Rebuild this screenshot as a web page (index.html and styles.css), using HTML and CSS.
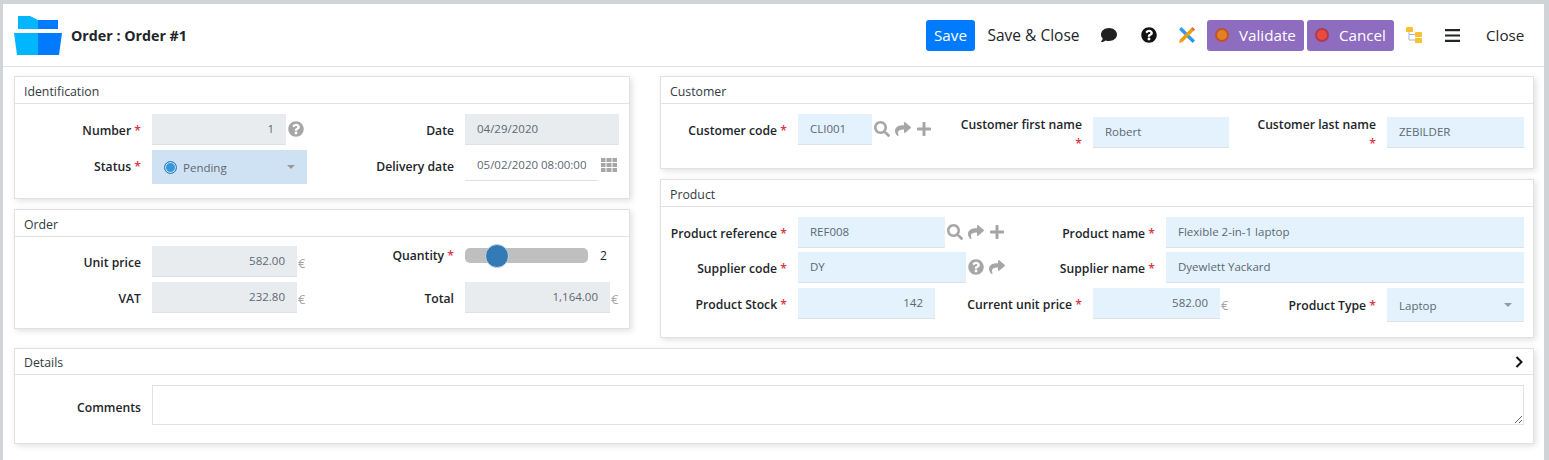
FILE: index.html
```html
<!DOCTYPE html>
<html lang="en">
<head>
    <meta name="viewport" content="width=device-width, initial-scale=1">
    <meta charset="UTF-8">
    <title>Order : Order #1</title>
    <link rel="stylesheet" href="styles.css">
</head>
<body>
<svg class="sprite" xmlns="http://www.w3.org/2000/svg">
    <symbol id="i-question" viewBox="0 0 512 512"><path d="M504 256c0 136.997-111.043 248-248 248S8 392.997 8 256C8 119.083 119.043 8 256 8s248 111.083 248 248zM262.655 90c-54.497 0-89.255 22.957-116.549 63.758-3.536 5.286-2.353 12.415 2.715 16.258l34.699 26.31c5.205 3.947 12.621 3.008 16.665-2.122 17.864-22.658 30.113-35.797 57.303-35.797 20.429 0 45.698 13.148 45.698 32.958 0 14.976-12.363 22.667-32.534 33.976C247.128 238.528 216 254.941 216 296v4c0 6.627 5.373 12 12 12h56c6.627 0 12-5.373 12-12v-1.333c0-28.462 83.186-29.647 83.186-106.667 0-58.002-60.165-102-116.531-102zM256 338c-25.365 0-46 20.635-46 46 0 25.364 20.635 46 46 46s46-20.636 46-46c0-25.365-20.635-46-46-46z"/></symbol>
    <symbol id="i-search" viewBox="0 0 512 512"><path d="M505 442.7L405.3 343c-4.5-4.5-10.6-7-17-7H372c27.6-35.3 44-79.7 44-128C416 93.1 322.9 0 208 0S0 93.1 0 208s93.1 208 208 208c48.3 0 92.7-16.4 128-44v16.3c0 6.4 2.5 12.5 7 17l99.7 99.7c9.4 9.4 24.6 9.4 33.9 0l28.3-28.3c9.4-9.4 9.4-24.6.1-34zM208 336c-70.7 0-128-57.2-128-128 0-70.7 57.2-128 128-128 70.7 0 128 57.2 128 128 0 70.7-57.2 128-128 128z"/></symbol>
    <symbol id="i-share" viewBox="0 0 512 512"><path d="M503.691 189.836L327.687 37.851C312.281 24.546 288 35.347 288 56.015v80.053C127.371 137.907 0 170.1 0 322.326c0 61.441 39.581 122.309 83.333 154.132 13.653 9.931 33.111-2.533 28.077-18.631C66.066 312.814 132.917 274.316 288 272.085V360c0 20.7 24.3 31.453 39.687 18.164l176.004-152c11.071-9.562 11.086-26.753 0-36.328z"/></symbol>
    <symbol id="i-plus" viewBox="0 0 448 512"><path d="M416 208H272V64c0-17.67-14.33-32-32-32h-32c-17.67 0-32 14.33-32 32v144H32c-17.67 0-32 14.33-32 32v32c0 17.67 14.33 32 32 32h144v144c0 17.67 14.33 32 32 32h32c17.67 0 32-14.33 32-32V304h144c17.67 0 32-14.33 32-32v-32c0-17.67-14.33-32-32-32z"/></symbol>
    <symbol id="i-comment" viewBox="0 0 512 512"><path d="M256 32C114.6 32 0 125.1 0 240c0 49.6 21.4 95 57 130.7C44.5 421.1 2.7 466 2.2 466.5c-2.2 2.3-2.8 5.7-1.5 8.7S4.8 480 8 480c66.3 0 116-31.8 140.6-51.4 32.7 12.3 69 19.4 107.4 19.4 141.4 0 256-93.1 256-208S397.4 32 256 32z"/></symbol>
</svg>

<div class="page">
    <header class="toolbar">
        <svg class="logo" viewBox="0 0 48 39" xmlns="http://www.w3.org/2000/svg">
            <path fill="#00b7ff" d="M4 0h12l8 4v9H4z"/>
            <path fill="#007bff" d="M24 4h20v9H24z"/>
            <path fill="#00b7ff" d="M0 17h24v22H3z"/>
            <path fill="#007bff" d="M24 17h24l-3 22H24z"/>
        </svg>
        <h1 class="title">Order : Order #1</h1>
        <div class="actions">
            <button class="btn btn-save" type="button">Save</button>
            <button class="btn btn-text btn-saveclose" type="button">Save &amp; Close</button>
            <svg class="tool tool-comment"><use href="#i-comment"/></svg>
            <svg class="tool tool-help"><use href="#i-question"/></svg>
            <svg class="tool tool-tools" viewBox="0 0 18 18" xmlns="http://www.w3.org/2000/svg">
                <path fill="#2f9be8" d="M3.4 1 17 14.6 14.6 17 1 3.4z"/>
                <path fill="#f39c12" d="M14 1.5 16.5 4 4.5 16 1 17l1-3.500z"/>
                <path fill="#e8703a" d="M13 2.500 14.500.9 17.100 3.500 15.500 5z"/>
            </svg>
            <button class="btn btn-step btn-validate" type="button"><span class="dot dot-orange"></span>Validate</button>
            <button class="btn btn-step btn-cancel" type="button"><span class="dot dot-red"></span>Cancel</button>
            <svg class="tool tool-tree" viewBox="0 0 16 16" xmlns="http://www.w3.org/2000/svg">
                <path fill="none" stroke="#a9b7c6" d="M3 4v9h7M3 7.500h7"/>
                <rect fill="#fbc02d" x="0" y="0" width="7" height="5" rx="1"/>
                <rect fill="#fbc02d" x="9" y="5" width="7" height="5" rx="1"/>
                <rect fill="#fbc02d" x="9" y="11" width="7" height="5" rx="1"/>
            </svg>
            <svg class="tool tool-bars" viewBox="0 0 15 13" xmlns="http://www.w3.org/2000/svg">
                <path fill="#212529" d="M0 0h15v2.200H0zM0 5.400h15v2.200H0zM0 10.800h15V13H0z"/>
            </svg>
            <button class="btn btn-text btn-close" type="button">Close</button>
        </div>
    </header>

    <main class="content">
        <div class="columns">
            <div class="col col-left">
                <section class="panel panel-ident">
                    <h2 class="panel-title">Identification</h2>
                    <div class="panel-body">
                        <div class="row row-1">
                            <div class="group group-a">
                                <label class="lbl">Number <em>*</em></label>
                                <span class="val ro right w-134">1</span>
                                <svg class="ico help"><use href="#i-question"/></svg>
                            </div>
                            <div class="group">
                                <label class="lbl">Date</label>
                                <span class="val ro w-154">04/29/2020</span>
                            </div>
                        </div>
                        <div class="row">
                            <div class="group group-a">
                                <label class="lbl">Status <em>*</em></label>
                                <span class="val select status w-155"><span class="status-dot"></span>Pending<i class="caret"></i></span>
                            </div>
                            <div class="group">
                                <label class="lbl">Delivery date</label>
                                <span class="val plain w-133">05/02/2020 08:00:00</span>
                                <svg class="grid-ico" viewBox="0 0 16 14" xmlns="http://www.w3.org/2000/svg"><path fill="#a6a6a6" d="M0 0h4.500v4H0zM5.500 0h5v4h-5zM11.500 0H16v4h-4.500zM0 5h4.500v4H0zM5.500 5h5v4h-5zM11.500 5H16v4h-4.500zM0 10h4.500v4H0zM5.500 10h5v4h-5zM11.500 10H16v4h-4.500z"/></svg>
                            </div>
                        </div>
                    </div>
                </section>

                <section class="panel panel-order">
                    <h2 class="panel-title">Order</h2>
                    <div class="panel-body">
                        <div class="row row-1">
                            <div class="group group-a">
                                <label class="lbl">Unit price</label>
                                <span class="val ro right w-145">582.00</span>
                                <span class="euro">€</span>
                            </div>
                            <div class="group">
                                <label class="lbl lbl-high">Quantity <em>*</em></label>
                                <div class="slider"><span class="knob"></span></div>
                                <span class="slider-val">2</span>
                            </div>
                        </div>
                        <div class="row">
                            <div class="group group-a">
                                <label class="lbl">VAT</label>
                                <span class="val ro right w-145">232.80</span>
                                <span class="euro">€</span>
                            </div>
                            <div class="group">
                                <label class="lbl">Total</label>
                                <span class="val ro right w-145">1,164.00</span>
                                <span class="euro">€</span>
                            </div>
                        </div>
                    </div>
                </section>
            </div>

            <div class="col col-right">
                <section class="panel panel-customer">
                    <h2 class="panel-title">Customer</h2>
                    <div class="panel-body">
                        <div class="row">
                            <div class="group group-b">
                                <label class="lbl">Customer code <em>*</em></label>
                                <span class="val req w-74">CLI001</span>
                                <span class="ico-set">
                                    <svg class="ico"><use href="#i-search"/></svg>
                                    <svg class="ico"><use href="#i-share"/></svg>
                                    <svg class="ico"><use href="#i-plus"/></svg>
                                </span>
                            </div>
                            <div class="group group-d">
                                <label class="lbl lbl-wrap">Customer first name <em>*</em></label>
                                <span class="val req low w-136">Robert</span>
                            </div>
                            <div class="group">
                                <label class="lbl lbl-wrap">Customer last name <em>*</em></label>
                                <span class="val req low w-137">ZEBILDER</span>
                            </div>
                        </div>
                    </div>
                </section>

                <section class="panel panel-product">
                    <h2 class="panel-title">Product</h2>
                    <div class="panel-body">
                        <div class="row row-p">
                            <div class="group group-c">
                                <label class="lbl">Product reference <em>*</em></label>
                                <span class="val req w-147">REF008</span>
                                <span class="ico-set">
                                    <svg class="ico"><use href="#i-search"/></svg>
                                    <svg class="ico"><use href="#i-share"/></svg>
                                    <svg class="ico"><use href="#i-plus"/></svg>
                                </span>
                            </div>
                            <div class="group">
                                <label class="lbl">Product name <em>*</em></label>
                                <span class="val req w-358">Flexible 2-in-1 laptop</span>
                            </div>
                        </div>
                        <div class="row row-1">
                            <div class="group group-c">
                                <label class="lbl">Supplier code <em>*</em></label>
                                <span class="val req w-168">DY</span>
                                <span class="ico-set">
                                    <svg class="ico"><use href="#i-question"/></svg>
                                    <svg class="ico"><use href="#i-share"/></svg>
                                </span>
                            </div>
                            <div class="group">
                                <label class="lbl">Supplier name <em>*</em></label>
                                <span class="val req w-358">Dyewlett Yackard</span>
                            </div>
                        </div>
                        <div class="row">
                            <div class="group group-b">
                                <label class="lbl">Product Stock <em>*</em></label>
                                <span class="val req right w-137">142</span>
                            </div>
                            <div class="group group-d">
                                <label class="lbl">Current unit price <em>*</em></label>
                                <span class="val req right w-127">582.00</span>
                                <span class="euro">€</span>
                            </div>
                            <div class="group">
                                <label class="lbl lbl-select">Product Type <em>*</em></label>
                                <span class="val select req w-137">Laptop<i class="caret"></i></span>
                            </div>
                        </div>
                    </div>
                </section>
            </div>
        </div>

        <section class="panel panel-details">
            <h2 class="panel-title">Details
                <svg class="chevron" viewBox="0 0 8 12" xmlns="http://www.w3.org/2000/svg"><path fill="none" stroke="#111" stroke-width="2" d="M1.500 1 6.500 6l-5 5"/></svg>
            </h2>
            <div class="panel-body">
                <div class="row">
                    <label class="lbl lbl-comments">Comments</label>
                    <textarea class="comments"></textarea>
                </div>
            </div>
        </section>
    </main>
</div>
</body>
</html>
```

FILE: styles.css
```css
* {
    box-sizing: border-box;
}

body {
    margin: 0;
    height: 460px;
    overflow: hidden;
    background-color: #ced4d7;
    padding: 4px 5px 0 3px;
    font-family: "Open Sans", "Liberation Sans", sans-serif;
    font-size: 12px;
    color: #212529;
}

.sprite {
    display: none;
}

.page {
    background-color: #fff;
    height: 456px;
}

/* toolbar */
.toolbar {
    display: flex;
    align-items: center;
    height: 63px;
    padding: 0 20px 0 11px;
    border-bottom: 1px solid #dee2e6;
}

.logo {
    width: 48px;
    height: 39px;
    flex: none;
}

.title {
    margin: 0 0 0 9px;
    font-size: 14.250px;
    font-weight: 700;
    color: #212529;
}

.actions {
    margin-left: auto;
    display: flex;
    align-items: center;
}

.btn {
    font-family: inherit;
    font-size: 15.200px;
    height: 31px;
    border: none;
    border-radius: 3px;
    padding: 0;
    background: none;
    color: #212529;
    cursor: pointer;
    white-space: nowrap;
}

.btn-save {
    width: 49px;
    background-color: #007bff;
    color: #fff;
}

.btn-saveclose {
    margin-left: 12px;
    width: 93px;
    font-size: 15.500px;
}

.btn-step {
    display: flex;
    align-items: center;
    background-color: #8e6cc0;
    color: #fff;
    padding-left: 8px;
}

.btn-validate {
    margin-left: 11px;
    width: 97px;
}

.btn-cancel {
    margin-left: 3px;
    width: 87px;
}

.btn-close {
    margin-left: 26px;
    width: 38px;
}

.dot {
    width: 14px;
    height: 14px;
    border-radius: 50%;
    margin-right: 10px;
    flex: none;
}

.dot-orange {
    background-color: #e67e22;
    border: 2px solid #b9562f;
}

.dot-red {
    background-color: #e74c3c;
    border: 2px solid #b03a50;
}

.tool {
    flex: none;
}

.tool-comment {
    width: 16px;
    height: 16px;
    margin-left: 21px;
    fill: #212121;
}

.tool-help {
    width: 16px;
    height: 16px;
    margin-left: 24px;
    fill: #111;
}

.tool-tools {
    width: 18px;
    height: 18px;
    margin-left: 21px;
}

.tool-tree {
    width: 16px;
    height: 16px;
    margin-left: 12px;
}

.tool-bars {
    width: 15px;
    height: 13px;
    margin-left: 23px;
}

/* content */
.content {
    padding: 9px 10px 0 11px;
}

.columns {
    display: flex;
    gap: 30px;
}

.col {
    display: flex;
    flex-direction: column;
    gap: 10px;
}

.col-left {
    width: 616px;
}

.col-right {
    width: 874px;
}

.panel {
    background-color: #fff;
    border: 1px solid #dee2e6;
    box-shadow: 2px 2px 6px rgba(0, 0, 0, 0.12);
}

.panel-ident {
    height: 123px;
}

.panel-order {
    height: 120px;
}

.panel-customer {
    height: 93px;
}

.panel-product {
    height: 159px;
}

.panel-details {
    margin-top: 10px;
    height: 96px;
}

.panel-title {
    position: relative;
    margin: 0;
    height: 27px;
    padding: 2px 0 0 9px;
    line-height: 26px;
    font-size: 12.300px;
    font-weight: 400;
    color: #343a40;
    border-bottom: 1px solid #dee2e6;
}

.panel-details .panel-title {
    height: 26px;
    padding-top: 1px;
}

.chevron {
    position: absolute;
    right: 10px;
    top: 7px;
    width: 8px;
    height: 12px;
}

.panel-body {
    padding-top: 10px;
}

.panel-order .panel-body {
    padding-top: 9px;
}

.row {
    display: flex;
    align-items: flex-start;
}

.row-1 {
    margin-bottom: 5px;
}

.row-p {
    margin-bottom: 4px;
}

.group {
    display: flex;
    flex: none;
    align-items: flex-start;
}

.group-a {
    width: 313px;
}

.group-b {
    width: 295px;
}

.group-c {
    width: 368px;
}

.group-d {
    width: 294px;
}

.lbl {
    flex: none;
    width: 126px;
    margin-right: 11px;
    height: 31px;
    line-height: 33px;
    text-align: right;
    font-weight: 600;
    font-size: 12.200px;
    color: #212529;
}

.lbl em {
    font-style: normal;
    color: #dc3545;
}

.lbl-high {
    line-height: 20px;
}

.lbl-select {
    line-height: 36px;
}

.lbl-comments {
    line-height: 45px;
}

.lbl-wrap {
    padding-top: 1px;
    line-height: 19px;
}

.val {
    display: block;
    flex: none;
    height: 31px;
    line-height: 29px;
    padding: 0 12px;
    font-size: 11.500px;
    color: #5c6873;
    border-bottom: 1px solid #dee2e6;
    white-space: nowrap;
}

.low {
    margin-top: 3px;
}

.right {
    text-align: right;
}

.ro {
    background-color: #e9ecef;
}

.req {
    background-color: #e3f2fd;
    line-height: 30px;
}

.plain {
    background-color: #fff;
}

.select {
    position: relative;
    height: 34px;
    line-height: 35px;
}

.status {
    background-color: #cfe2f3;
    border-bottom: none;
    display: flex;
    align-items: center;
}

.status-dot {
    width: 13px;
    height: 13px;
    margin-right: 6px;
    border-radius: 50%;
    background-color: #3498db;
    border: 1px solid #2c7fb8;
    box-shadow: inset 0 0 0 1px #cfe2f3;
}

.caret {
    position: absolute;
    right: 12px;
    top: 15px;
    border-left: 4px solid transparent;
    border-right: 4px solid transparent;
    border-top: 4px solid #999;
}

.w-74 { width: 74px; }
.w-127 { width: 127px; }
.w-133 { width: 133px; }
.w-134 { width: 134px; }
.w-136 { width: 136px; }
.w-137 { width: 137px; }
.w-145 { width: 145px; }
.w-147 { width: 147px; }
.w-154 { width: 154px; }
.w-155 { width: 155px; }
.w-168 { width: 168px; }
.w-358 { width: 358px; }

.ico {
    width: 16px;
    height: 16px;
    fill: #a6a6a6;
    flex: none;
}

.help {
    margin: 7px 0 0 2px;
}

.ico-set {
    display: flex;
    gap: 5px;
    margin: 7px 0 0 2px;
}

.grid-ico {
    width: 16px;
    height: 14px;
    margin: 8px 0 0 3px;
}

.euro {
    margin: 8px 0 0 1px;
    color: #a6a6a6;
    font-size: 13px;
}

.slider {
    position: relative;
    width: 123px;
    height: 15px;
    margin-top: 2px;
    background-color: #bfbfbf;
    border-radius: 5px;
}

.knob {
    position: absolute;
    left: 20px;
    top: -4px;
    width: 24px;
    height: 24px;
    border-radius: 50%;
    background-color: #337ab7;
    border: 1px solid #c9d6e2;
}

.slider-val {
    margin: 1px 0 0 12px;
    color: #212529;
}

.comments {
    display: block;
    width: 1372px;
    height: 40px;
    border: 1px solid #dee2e6;
    background-color: #fff;
    margin: 0;
    resize: both;
}
```
